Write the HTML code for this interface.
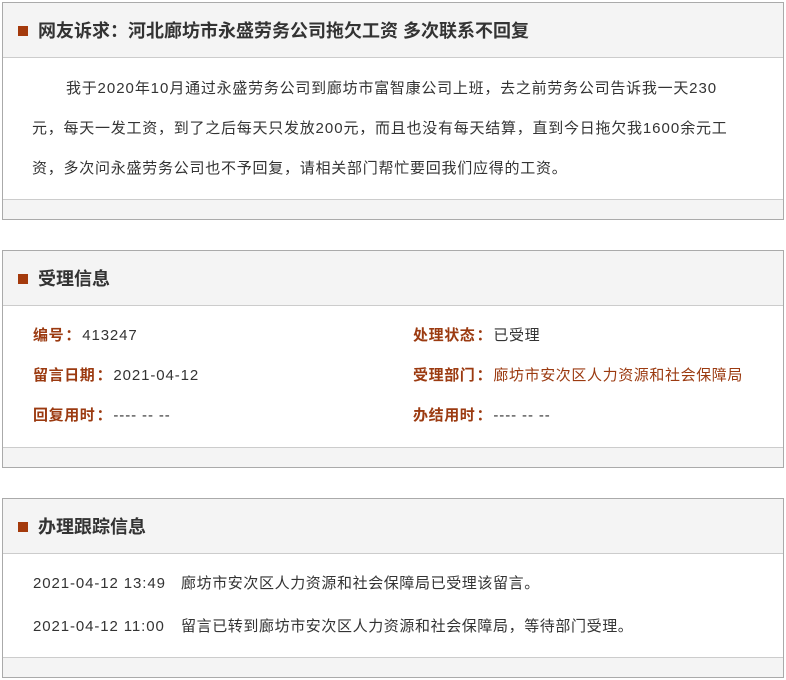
<!DOCTYPE html>
<html><head><meta charset="utf-8"><style>
*{margin:0;padding:0;box-sizing:border-box}
body{width:786px;height:680px;background:#fff;font-family:"Liberation Sans","Noto Sans CJK SC",sans-serif;color:#333;position:relative;overflow:hidden}
.p{position:absolute;left:2px;width:782px;border:1px solid #aaa;background:#fff}
.h{position:absolute;left:0;top:0;right:0;height:55px;background:#f4f4f4;border-bottom:1px solid #ccc}
.h i{position:absolute;left:15px;top:23px;width:10px;height:10px;background:#a43a0c}
.h b{position:absolute;left:35px;top:15px;font-size:18px;line-height:26px;color:#333}
.f{position:absolute;left:0;right:0;bottom:0;height:20px;background:#f4f4f4;border-top:1px solid #ccc}
.t{position:absolute;font-size:15px;line-height:20px;white-space:nowrap;letter-spacing:0.6px}
.l{color:#9b3a10;font-weight:bold}
.br{color:#9b3a10}
.n{letter-spacing:0.9px}
.c{display:inline-block;width:18px;text-align:center}
.para{position:absolute;left:29px;font-size:15px;line-height:20px;white-space:nowrap;letter-spacing:0.75px}
.para .n{letter-spacing:1px}
</style></head><body>
<div class="p" style="top:2px;height:218px">
 <div class="h"><i></i><b>网友诉求<span class="c">：</span>河北廊坊市永盛劳务公司拖欠工资 多次联系不回复</b></div>
 <div class="para" style="left:63px;top:76px">我于<span class="n">2020</span>年<span class="n">10</span>月通过永盛劳务公司到廊坊市富智康公司上班，去之前劳务公司告诉我一天<span class="n">230</span></div>
 <div class="para" style="top:116px">元，每天一发工资，到了之后每天只发放<span class="n">200</span>元，而且也没有每天结算，直到今日拖欠我<span class="n">1600</span>余元工</div>
 <div class="para" style="top:156px">资，多次问永盛劳务公司也不予回复，请相关部门帮忙要回我们应得的工资。</div>
 <div class="f"></div>
</div>
<div class="p" style="top:250px;height:218px">
 <div class="h"><i></i><b>受理信息</b></div>
 <div class="t" style="left:30px;top:75px"><span class="l">编号<span class="c">：</span></span><span class="n">413247</span></div>
 <div class="t" style="left:410px;top:75px"><span class="l">处理状态<span class="c">：</span></span>已受理</div>
 <div class="t" style="left:30px;top:115px"><span class="l">留言日期<span class="c">：</span></span><span class="n">2021-04-12</span></div>
 <div class="t" style="left:410px;top:115px"><span class="l">受理部门<span class="c">：</span></span><span class="br">廊坊市安次区人力资源和社会保障局</span></div>
 <div class="t" style="left:30px;top:155px"><span class="l">回复用时<span class="c">：</span></span><span class="n">---- -- --</span></div>
 <div class="t" style="left:410px;top:155px"><span class="l">办结用时<span class="c">：</span></span><span class="n">---- -- --</span></div>
 <div class="f"></div>
</div>
<div class="p" style="top:498px;height:180px">
 <div class="h"><i></i><b>办理跟踪信息</b></div>
 <div class="t n" style="left:30px;top:75px">2021-04-12 13:49</div>
 <div class="t" style="left:178px;top:75px">廊坊市安次区人力资源和社会保障局已受理该留言。</div>
 <div class="t n" style="left:30px;top:118px">2021-04-12 11:00</div>
 <div class="t" style="left:178px;top:118px">留言已转到廊坊市安次区人力资源和社会保障局，等待部门受理。</div>
 <div class="f"></div>
</div>
</body></html>
